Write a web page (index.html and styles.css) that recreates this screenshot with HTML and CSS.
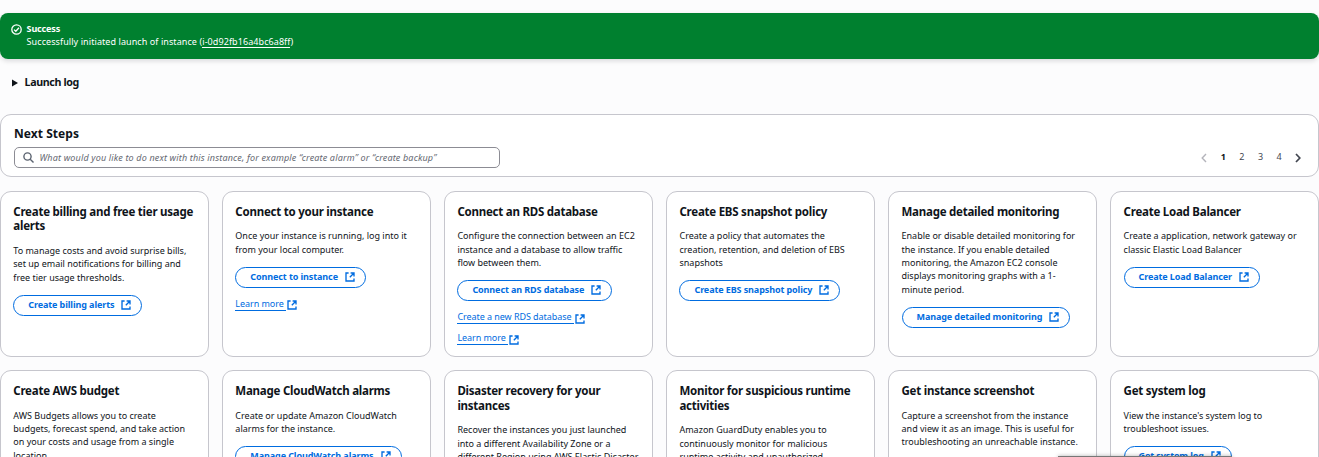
FILE: index.html
```html
<!DOCTYPE html>
<html lang="en">
<head>
<meta charset="utf-8">
<title>Launch an instance</title>
<link rel="stylesheet" href="styles.css">
</head>
<body>
<svg width="0" height="0" class="defs">
  <symbol id="external" viewBox="0 0 10 10"><path d="M3.6 1H1v8h8V6.4M5.6 1H9v3.4M9 1 4.8 5.2" fill="none" stroke="currentColor" stroke-width="1.35"/></symbol>
</svg>
<div class="flash">
  <svg class="flash-icon" viewBox="0 0 11 11"><g fill="none" stroke="#fff" stroke-width="1.3"><circle cx="5.5" cy="5.5" r="4.7"/><path d="M3 5.6 4.8 7.3 8 3.8"/></g></svg>
  <div>
    <div class="flash-title">Success</div>
    <div class="flash-text">Successfully initiated launch of instance (<a>i-0d92fb16a4bc6a8ff</a>)</div>
  </div>
</div>
<div class="log"><svg class="caret" viewBox="0 0 6 8"><path d="M0 .5v7L6 4z" fill="#0f141a"/></svg><span>Launch log</span></div>
<section class="steps">
  <div>
    <h2>Next Steps</h2>
    <div class="search">
      <svg viewBox="0 0 11 11"><g fill="none" stroke="#5b6370" stroke-width="1.4"><circle cx="4.5" cy="4.5" r="3.6"/><path d="m7.2 7.2 3.3 3.3"/></g></svg>
      <span>What would you like to do next with this instance, for example “create alarm” or “create backup”</span>
    </div>
  </div>
  <div class="pages">
    <svg viewBox="0 0 6 10"><path d="M5 1 1.2 5 5 9" fill="none" stroke="#b4b4bb" stroke-width="1.4"/></svg>
    <b>1</b><span>2</span><span>3</span><span>4</span>
    <svg viewBox="0 0 6 10"><path d="m1 1 3.8 4L1 9" fill="none" stroke="#424650" stroke-width="1.7"/></svg>
  </div>
</section>
<main class="cards">
  <article class="card">
    <h3>Create billing and free tier usage<br>alerts</h3>
    <p>To manage costs and avoid surprise bills,<br>set up email notifications for billing and<br>free tier usage thresholds.</p>
    <a class="btn"><span>Create billing alerts</span><svg><use href="#external"/></svg></a>
  </article>
  <article class="card">
    <h3>Connect to your instance</h3>
    <p>Once your instance is running, log into it<br>from your local computer.</p>
    <a class="btn"><span>Connect to instance</span><svg><use href="#external"/></svg></a>
    <a class="link"><span>Learn more</span><svg><use href="#external"/></svg></a>
  </article>
  <article class="card">
    <h3>Connect an RDS database</h3>
    <p>Configure the connection between an EC2<br>instance and a database to allow traffic<br>flow between them.</p>
    <a class="btn"><span>Connect an RDS database</span><svg><use href="#external"/></svg></a>
    <a class="link"><span>Create a new RDS database</span><svg><use href="#external"/></svg></a>
    <a class="link"><span>Learn more</span><svg><use href="#external"/></svg></a>
  </article>
  <article class="card">
    <h3>Create EBS snapshot policy</h3>
    <p>Create a policy that automates the<br>creation, retention, and deletion of EBS<br>snapshots</p>
    <a class="btn"><span>Create EBS snapshot policy</span><svg><use href="#external"/></svg></a>
  </article>
  <article class="card">
    <h3>Manage detailed monitoring</h3>
    <p>Enable or disable detailed monitoring for<br>the instance. If you enable detailed<br>monitoring, the Amazon EC2 console<br>displays monitoring graphs with a 1-<br>minute period.</p>
    <a class="btn"><span>Manage detailed monitoring</span><svg><use href="#external"/></svg></a>
  </article>
  <article class="card">
    <h3>Create Load Balancer</h3>
    <p>Create a application, network gateway or<br>classic Elastic Load Balancer</p>
    <a class="btn"><span>Create Load Balancer</span><svg><use href="#external"/></svg></a>
  </article>
  <article class="card">
    <h3>Create AWS budget</h3>
    <p>AWS Budgets allows you to create<br>budgets, forecast spend, and take action<br>on your costs and usage from a single<br>location.</p>
  </article>
  <article class="card">
    <h3>Manage CloudWatch alarms</h3>
    <p>Create or update Amazon CloudWatch<br>alarms for the instance.</p>
    <a class="btn"><span>Manage CloudWatch alarms</span><svg><use href="#external"/></svg></a>
  </article>
  <article class="card">
    <h3>Disaster recovery for your<br>instances</h3>
    <p>Recover the instances you just launched<br>into a different Availability Zone or a<br>different Region using AWS Elastic Disaster</p>
  </article>
  <article class="card">
    <h3>Monitor for suspicious runtime<br>activities</h3>
    <p>Amazon GuardDuty enables you to<br>continuously monitor for malicious<br>runtime activity and unauthorized</p>
  </article>
  <article class="card">
    <h3>Get instance screenshot</h3>
    <p>Capture a screenshot from the instance<br>and view it as an image. This is useful for<br>troubleshooting an unreachable instance.</p>
  </article>
  <article class="card">
    <h3>Get system log</h3>
    <p>View the instance's system log to<br>troubleshoot issues.</p>
    <a class="btn"><span>Get system log</span><svg><use href="#external"/></svg></a>
  </article>
</main>
<div class="popup"></div>
</body>
</html>
```
FILE: styles.css
```css
* { box-sizing: border-box; }
html, body { height: 457px; overflow: hidden; }
body { margin: 0; padding-top: 13px; background: #fcfcfd; color: #0f141a; font-family: "Noto Sans", "Open Sans", sans-serif; font-size: 9px; line-height: 13.33px; white-space: nowrap; position: relative; }
.defs { position: absolute; }
svg { display: block; flex: none; }
.flash { height: 46px; border-radius: 8px; background: #00802f; color: #fff; display: flex; gap: 4.6px; padding: 9px 11px; box-shadow: 0 2px 5px rgba(0,7,22,.14); }
.flash-icon { width: 11px; height: 11px; margin-top: 2px; }
.flash-title { font-weight: 700; letter-spacing: -.15px; }
.flash-text { letter-spacing: .08px; }
.flash-text a { border-bottom: 1px solid #fff; display: inline-block; line-height: 11px; }
.log { display: flex; align-items: center; gap: 6.6px; height: 16px; margin: 16px 0 0 12px; font-size: 10.7px; font-weight: 700; letter-spacing: -.38px; }
.caret { width: 6px; height: 8px; }
.steps { margin-top: 23px; height: 63px; border: 1px solid #c6c6cd; border-radius: 11px; background: #fff; display: flex; justify-content: space-between; padding: 11px 17px 0 13px; }
h2 { margin: 0; font-size: 12px; line-height: 16px; letter-spacing: .05px; }
.search { width: 486px; height: 21px; margin-top: 5px; border: 1px solid #8c8c94; border-radius: 5px; display: flex; align-items: center; gap: 6px; padding-left: 7.5px; color: #656871; font-style: italic; letter-spacing: .165px; }
.search svg { width: 11px; height: 11px; }
.pages { display: flex; align-items: center; gap: 13.4px; height: 13px; margin-top: 24px; color: #424650; }
.pages svg { width: 6px; height: 10px; margin-top: 3px; }
.pages b { color: #0f141a; }
.cards { margin-top: 14px; display: grid; grid-template-columns: repeat(6, minmax(0, 1fr)); grid-auto-rows: 166px; gap: 13.33px; }
.card { border: 1px solid #c6c6cd; border-radius: 11px; background: #fff; padding: 12.7px 12.3px 0; display: flex; flex-direction: column; align-items: flex-start; }
.card > * { flex: none; }
h3 { margin: 0 0 10px; font-size: 11.5px; line-height: 14.67px; letter-spacing: -.24px; }
p { margin: 0 0 11px; }
.btn { height: 20.5px; border: 1.33px solid #006ce0; border-radius: 11px; color: #006ce0; display: flex; align-items: center; gap: 7px; padding: 0 10px 2px 14px; font-weight: 700; letter-spacing: -.1px; }
.btn svg, .link svg { width: 10px; height: 10px; }
.btn svg { margin-top: 1px; }
.link { color: #006ce0; display: flex; align-items: center; height: 13.33px; margin-top: 8px; }
.btn + .link { margin-top: 10px; }
.link span { border-bottom: 1px solid #006ce0; padding-right: 2px; line-height: 12px; letter-spacing: -.06px; }
.link svg { margin: 2px 0 0 1px; }
.popup { position: absolute; left: 1058px; top: 456px; width: 174px; height: 20px; background: #777; box-shadow: 0 0 4px rgba(0,0,0,.3); }
```
